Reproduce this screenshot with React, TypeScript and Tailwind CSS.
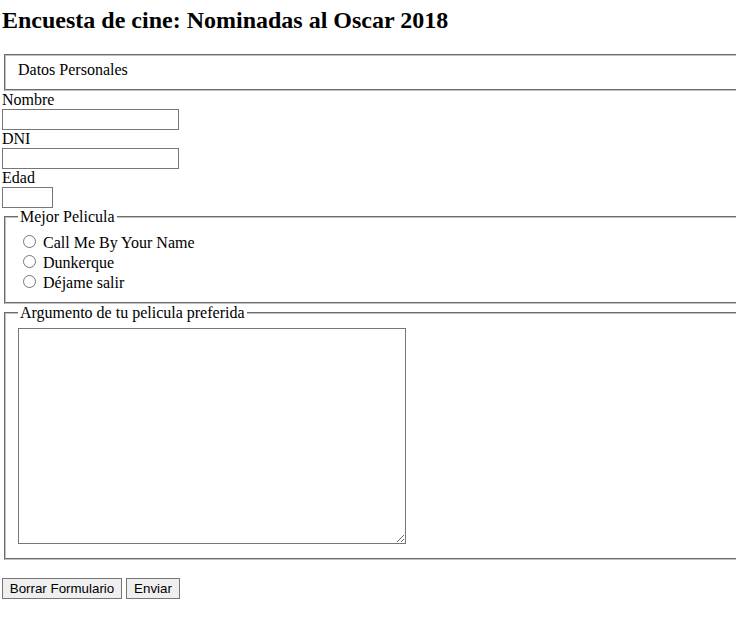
import { useState } from "react";

const peliculas = ["Call Me By Your Name", "Dunkerque", "Déjame salir"];

const fieldsetCls =
	"mx-[2px] w-[760px] border-2 border-[rgb(192,192,192)] [border-style:groove] px-[12px] pb-[10px] pt-[5.6px]";

export default function App() {
	const [pelicula, setPelicula] = useState("");

	return (
		<div className="h-[619px] w-[736px] overflow-hidden bg-white px-[2px] font-['Liberation_Serif',serif] text-[16px] leading-[18px] text-black">
			<h1 className="mt-[6px] text-[24px] font-bold leading-[28px]">
				Encuesta de cine: Nominadas al Oscar 2018
			</h1>

			<form onSubmit={(e) => e.preventDefault()}>
				<fieldset className={`${fieldsetCls} mt-[20px] !pt-[5px]`}>
					<div>Datos Personales</div>
				</fieldset>

				<label htmlFor="nombre" className="block">Nombre</label>
				<input id="nombre" type="text" className="block h-[21px] w-[177px] border border-[#767676] px-[2px] font-['Liberation_Sans',sans-serif] text-[13.33px]" />
				<label htmlFor="dni" className="block">DNI</label>
				<input id="dni" type="text" className="block h-[21px] w-[177px] border border-[#767676] px-[2px] font-['Liberation_Sans',sans-serif] text-[13.33px]" />
				<label htmlFor="edad" className="block">Edad</label>
				<input id="edad" type="text" className="block h-[21px] w-[51px] border border-[#767676] px-[2px] font-['Liberation_Sans',sans-serif] text-[13.33px]" />

				<fieldset className={fieldsetCls}>
					<legend className="px-[2px]">Mejor Pelicula</legend>
					{peliculas.map((p) => (
						<div key={p} className="leading-[normal]">
							<input
								type="radio"
								name="pelicula"
								checked={pelicula === p}
								onChange={() => setPelicula(p)}
								className="ml-[5px] mr-[3px] mt-[3px]"
							/>{" "}
							{p}
						</div>
					))}
				</fieldset>

				<fieldset className={fieldsetCls}>
					<legend className="px-[2px]">Argumento de tu pelicula preferida</legend>
					<div className="leading-[normal]">
						<textarea className="mt-[1px] h-[216px] w-[388px] border border-[#767676] p-[2px] font-['Liberation_Mono',monospace] text-[13.33px]" />
					</div>
				</fieldset>

				<div className="mt-[18px] flex gap-[4px] font-['Liberation_Sans',sans-serif] text-[13.33px]">
					<button type="reset" className="h-[21px] w-[120px] border border-[#767676] bg-[#efefef] text-center leading-[17px]">
						Borrar Formulario
					</button>
					<button type="submit" className="h-[21px] w-[54px] border border-[#767676] bg-[#efefef] text-center leading-[17px]">
						Enviar
					</button>
				</div>
			</form>
		</div>
	);
}
